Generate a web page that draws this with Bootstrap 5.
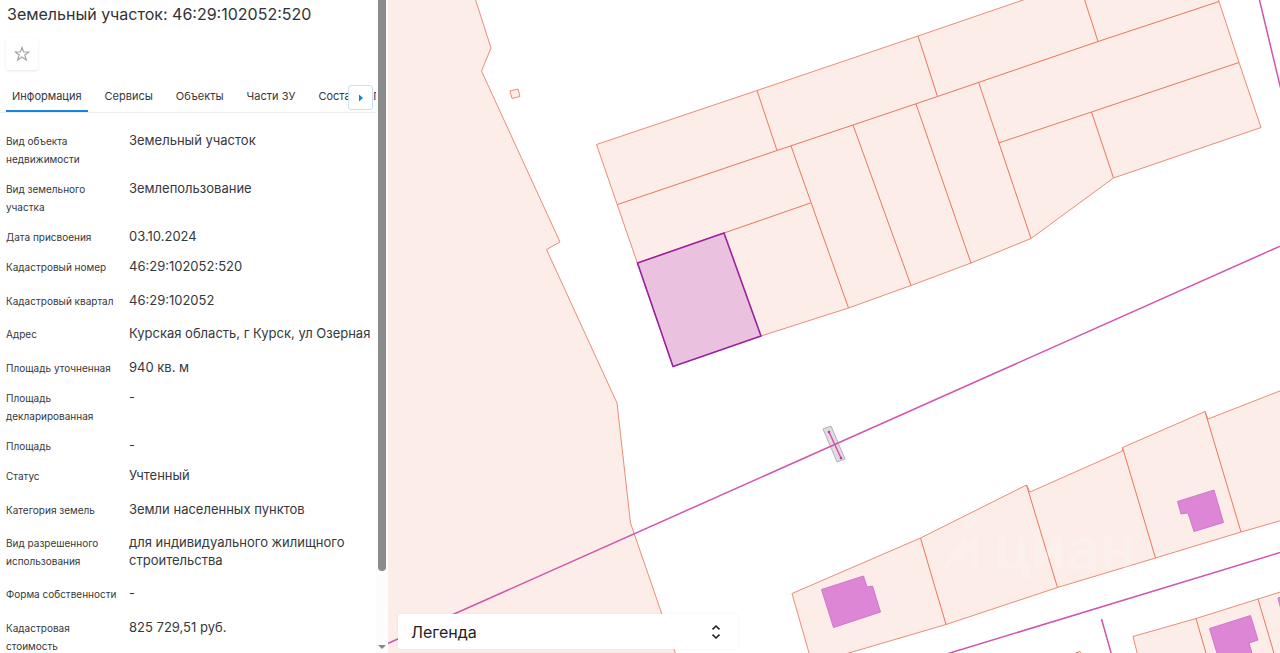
<!DOCTYPE html>
<html lang="ru">
<head>
<meta charset="utf-8">
<meta name="viewport" content="width=device-width, initial-scale=1">
<title>Земельный участок: 46:29:102052:520</title>
<link href="https://cdn.jsdelivr.net/npm/bootstrap@5.3.0/dist/css/bootstrap.min.css" rel="stylesheet">
<style>
  body { font-family: Inter, "Noto Sans", sans-serif; color: #35383d; }
  .side-panel { width: 388px; }
  .panel-title { font-size: 16px; line-height: 28px; font-weight: 400; color: #303336; padding-left: 7px; }
  .fav-btn { width: 32px; height: 32px; margin: 10px 0 0 6px; border-radius: 3px; box-shadow: 0 1px 3px rgba(0,0,0,.1); }
  .tab-strip { margin-top: 10px; border-bottom: 1px solid #ebedf0; padding-left: 6px; gap: 11px; height: 33px; }
  .tab-strip .nav-link { font-size: 11px; line-height: 16px; padding: 8px 6px 7px; color: #35383d; background: none; border: 0; border-bottom: 2px solid transparent; border-radius: 0; white-space: nowrap; }
  .tab-strip .nav-link.active { border-color: #1583e0; }
  .tab-next { right: 3px; top: 5px; width: 25px; height: 25px; border: 1px solid #c6e0f8; border-radius: 3px; }
  .facts { padding: 18px 0 0 6px; }
  .fact-term { width: 123px; font-size: 10px; line-height: 18px; font-weight: 400; }
  .fact-value { font-size: 13px; line-height: 18px; }
  .space-s { margin-bottom: 11px; }
  .space-m { margin-bottom: 14px; }
  .space-l { margin-bottom: 15px; }
  .scroll-track { width: 12px; background: #fcfcfc; }
  .scroll-thumb { width: 8px; background: #8b8b8b; border-radius: 0 0 4px 4px; flex: 0 0 88%; }
  .map-view { min-width: 0; background: #fff; }
  .parcel { fill: #fcede9; stroke: #ea8c78; stroke-width: 1; }
  .borders { fill: none; stroke: #e9765e; stroke-width: 1; }
  .house { fill: #dc86d5; stroke: #d276cd; stroke-width: 1; }
  .power { fill: none; stroke: #d353ad; stroke-width: 1.5; }
  .picked { fill: #eac2df; stroke: #9b219f; stroke-width: 1.6; }
  .mark-text { font: 600 58px Inter, sans-serif; fill: #fff; opacity: .2; }
  .legend-btn { left: 10px; bottom: 4px; width: 340px; height: 35px; font-size: 16px; line-height: 24px; font-weight: 400; color: #1f2226; padding: 0 16px 0 13px; border-radius: 3px; box-shadow: 0 0 2px rgba(0,0,0,.08); }
</style>
</head>
<body>
<div class="d-flex vh-100 overflow-hidden">
  <aside class="side-panel d-flex flex-shrink-0 bg-white">
    <div class="flex-grow-1 overflow-hidden">
      <h1 class="panel-title m-0">Земельный участок: 46:29:102052:520</h1>
      <button type="button" class="fav-btn bg-white border-0 p-0 d-flex align-items-center justify-content-center" aria-label="В избранное">
        <svg width="16" height="16" viewBox="0 0 16 16" fill="none" stroke="#a5a5a5" stroke-width="1.2"><path d="M8 1.5 9.700 6H14.700L10.800 9 12.300 14 8 11 3.700 14 5.200 9 1.300 6H6.300Z"/></svg>
      </button>
      <div class="position-relative">
        <nav class="tab-strip nav flex-nowrap overflow-hidden">
          <button type="button" class="nav-link active">Информация</button>
          <button type="button" class="nav-link">Сервисы</button>
          <button type="button" class="nav-link">Объекты</button>
          <button type="button" class="nav-link">Части ЗУ</button>
          <button type="button" class="nav-link">Состав ЕЗП</button>
        </nav>
        <button type="button" class="tab-next position-absolute bg-white p-0 d-flex align-items-center justify-content-center" aria-label="Далее">
          <svg width="6" height="8" viewBox="0 0 6 8"><path d="M1 .5 5 4 1 7.5Z" fill="#1583e0"/></svg>
        </button>
      </div>
      <dl class="facts m-0">
        <div class="d-flex align-items-baseline space-s"><dt class="fact-term flex-shrink-0">Вид объекта<br>недвижимости</dt><dd class="fact-value m-0">Земельный участок</dd></div>
        <div class="d-flex align-items-baseline space-s"><dt class="fact-term flex-shrink-0">Вид земельного<br>участка</dt><dd class="fact-value m-0">Землепользование</dd></div>
        <div class="d-flex align-items-baseline space-s"><dt class="fact-term flex-shrink-0">Дата присвоения</dt><dd class="fact-value m-0">03.10.2024</dd></div>
        <div class="d-flex align-items-baseline space-l"><dt class="fact-term flex-shrink-0">Кадастровый номер</dt><dd class="fact-value m-0">46:29:102052:520</dd></div>
        <div class="d-flex align-items-baseline space-m"><dt class="fact-term flex-shrink-0">Кадастровый квартал</dt><dd class="fact-value m-0">46:29:102052</dd></div>
        <div class="d-flex align-items-baseline space-l"><dt class="fact-term flex-shrink-0">Адрес</dt><dd class="fact-value m-0">Курская область, г Курск, ул Озерная</dd></div>
        <div class="d-flex align-items-baseline space-s"><dt class="fact-term flex-shrink-0">Площадь уточненная</dt><dd class="fact-value m-0">940 кв. м</dd></div>
        <div class="d-flex align-items-baseline space-s"><dt class="fact-term flex-shrink-0">Площадь<br>декларированная</dt><dd class="fact-value m-0">-</dd></div>
        <div class="d-flex align-items-baseline space-s"><dt class="fact-term flex-shrink-0">Площадь</dt><dd class="fact-value m-0">-</dd></div>
        <div class="d-flex align-items-baseline space-l"><dt class="fact-term flex-shrink-0">Статус</dt><dd class="fact-value m-0">Учтенный</dd></div>
        <div class="d-flex align-items-baseline space-m"><dt class="fact-term flex-shrink-0">Категория земель</dt><dd class="fact-value m-0">Земли населенных пунктов</dd></div>
        <div class="d-flex align-items-baseline space-m"><dt class="fact-term flex-shrink-0">Вид разрешенного<br>использования</dt><dd class="fact-value m-0">для индивидуального жилищного строительства</dd></div>
        <div class="d-flex align-items-baseline space-l"><dt class="fact-term flex-shrink-0">Форма собственности</dt><dd class="fact-value m-0">-</dd></div>
        <div class="d-flex align-items-baseline"><dt class="fact-term flex-shrink-0">Кадастровая<br>стоимость</dt><dd class="fact-value m-0">825 729,51 руб.</dd></div>
      </dl>
    </div>
    <div class="scroll-track d-flex flex-column align-items-center justify-content-between flex-shrink-0 pb-1" aria-hidden="true">
      <div class="scroll-thumb"></div>
      <svg width="8" height="4" viewBox="0 0 8 4"><path d="M0 0H8L4 4Z" fill="#858585"/></svg>
    </div>
  </aside>

  <main class="map-view flex-grow-1 position-relative overflow-hidden">
    <svg class="d-block w-100 h-100" viewBox="388 0 892 653" preserveAspectRatio="xMinYMin slice" role="img" aria-label="Кадастровая карта">
      <!-- western quarter -->
      <path class="parcel" d="M380-5H474L491 48 481.500 71 560 242 546.500 249.500 617 403 630.500 523 676 655V660H380Z"/>
      <path class="parcel" d="M510 91 518 89 520 96.500 512 98.500Z"/>
      <!-- northern block -->
      <path class="parcel" d="M596.500 144.500 757 90.500 918 36 1026-1 1060-12H1214L1219 1.500 1239 62.500 1261 127.500 1113.500 178 1031 238.500 971 263 911 285.500 848.500 308 761 336 673 366.500Z"/>
      <path class="borders" d="M617.500 204.500 777 150.500 853 125 937.500 96.500 1098 41.500 1219 1.500M757 90.500 777 150.500M918 36 937.500 96.500M1084-2 1098 41.500M791 146 848.500 308M853 125 911 285.500M916 104 971 263M978.500 82 1031 238.500M998.500 143 1091.500 112 1239 62.500M1091.500 112 1113.500 178M637.500 263 724 233 810.500 203"/>
      <path class="picked" d="M637.500 263 724 233 761 336 673 366.500Z"/>
      <!-- southern blocks -->
      <path class="parcel" d="M811 660 792 593.500 920.500 538 1026.500 485 1030 492 1122.500 451V447.500L1205 411.500 1208 419 1290 387V518L1241 532 1155.500 558 1057.500 587.500 946 624.500 825 660Z"/>
      <path class="borders" d="M920.500 538 946 624.500M1026.500 485 1057.500 587.500M1122.500 447.500 1155.500 558M1205 411.500 1241 532"/>
      <path class="parcel" d="M1139 660 1133 636.500 1196 618.500 1258 599 1290 589V660Z"/>
      <path class="borders" d="M1196 618.500 1208 660M1258 599 1276 660M1073 654 1080 651.500 1081 654"/>
      <path class="house" d="M821.500 589.500 863.500 576 867 587 872.500 586 880.500 612 833.500 627.500Z"/>
      <path class="house" d="M1177.500 501.500 1214 490 1223.500 522.500 1194 531.500 1188 513 1181 514Z"/>
      <path class="house" d="M1209.500 628.500 1250.500 615.500 1258 640 1249 643 1254 660H1219Z"/>
      <path class="house" d="M1278 598 1290 594V620L1284 622Z"/>
      <!-- power lines and pylon -->
      <path d="M823 429 831 426 845 459 837 462Z" fill="#e2dce2" stroke="#b5b0b5"/>
      <path class="power" d="M380 647 1285 244M1259-2 1282 94M940 656 1285 551M1101.500 619 1112 656M829 432 841 458"/>
      <circle cx="829" cy="432" r="1.300" fill="#b93c96"/>
      <circle cx="841" cy="458" r="1.300" fill="#b93c96"/>
      <!-- watermark -->
      <g opacity=".2" fill="none" stroke="#fff" stroke-width="5"><path d="M944 569 965 541 959 562 975 542V566"/><circle cx="971" cy="521" r="5" stroke-width="3"/></g>
      <text class="mark-text" x="994" y="569">циан</text>
    </svg>
    <button type="button" class="legend-btn position-absolute bg-white border-0 d-flex align-items-center justify-content-between">
      <span>Легенда</span>
      <svg width="12" height="16" viewBox="0 0 12 16" fill="none" stroke="#1f2226" stroke-width="1.600"><path d="M2.500 5.300 6 2 9.500 5.300M2.500 10.700 6 14 9.500 10.700"/></svg>
    </button>
  </main>
</div>
<script src="https://cdn.jsdelivr.net/npm/bootstrap@5.3.0/dist/js/bootstrap.bundle.min.js"></script>
</body>
</html>
